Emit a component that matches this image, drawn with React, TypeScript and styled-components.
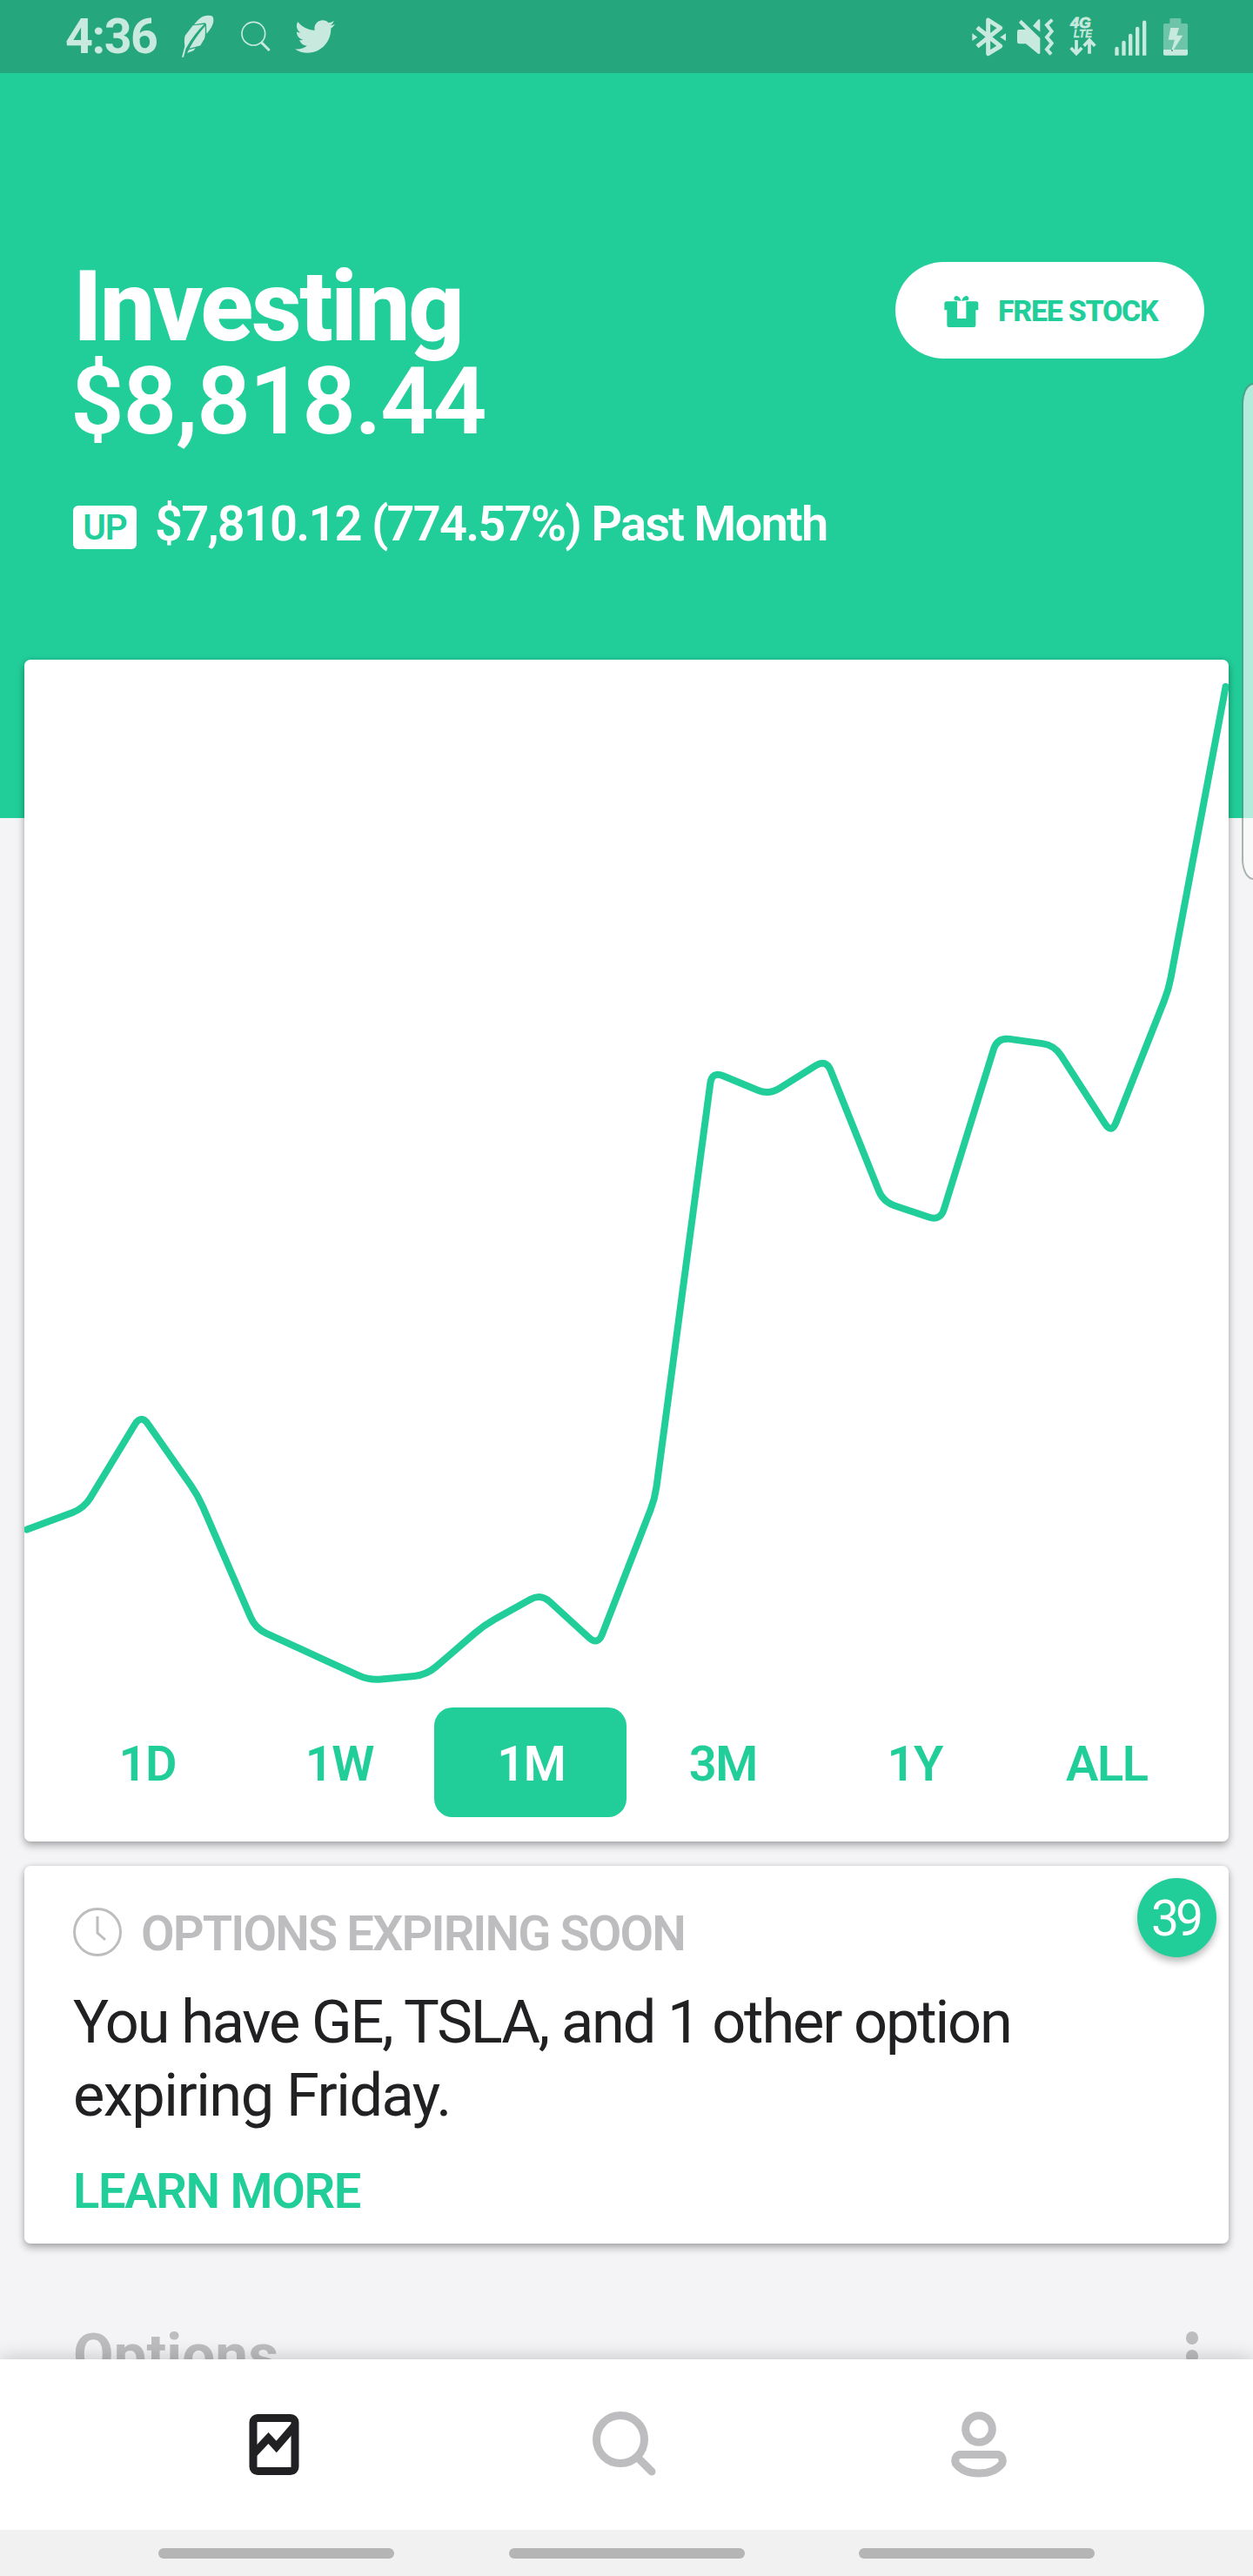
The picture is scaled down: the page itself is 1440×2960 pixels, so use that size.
import React from 'react';
import styled, { createGlobalStyle } from 'styled-components';
import { FaTwitter } from 'react-icons/fa';

const GREEN = '#21ce99';
const GREY = '#bdbdbf';
const INK = '#212123';
const STATUS_ICON = '#c8e9de';

const GlobalStyle = createGlobalStyle`
  * { box-sizing: border-box; }
  body {
    margin: 0;
    background: #f4f4f6;
    font-family: Roboto, "Liberation Sans", sans-serif;
  }
`;

const Screen = styled.div`
  position: relative;
  width: 1440px;
  height: 2960px;
  display: flex;
  flex-direction: column;
  overflow: hidden;
  background: #f4f4f6;
`;

const StatusBar = styled.header`
  flex: none;
  height: 84px;
  padding: 0 75px 0 75px;
  display: flex;
  align-items: center;
  justify-content: space-between;
  background: #26a67c;
  color: ${STATUS_ICON};
`;

const StatusGroup = styled.div`
  display: flex;
  align-items: center;
  height: 84px;
`;

const Clock = styled.span`
  width: 134px;
  padding-top: 1px;
  font-size: 55.5px;
  line-height: 84px;
  font-weight: 700;
  letter-spacing: -1.4px;
`;

const StatusIcon = styled.svg<{ $gap?: number }>`
  display: block;
  flex: none;
  margin-left: ${(p) => p.$gap ?? 0}px;
  fill: currentColor;
`;

const TwitterIcon = styled(FaTwitter)`
  width: 46px;
  height: 46px;
  margin-left: 28px;
`;

const Hero = styled.section`
  flex: none;
  height: 856px;
  padding: 214px 56px 0 84px;
  background: ${GREEN};
  color: #fff;
`;

const HeroTop = styled.div`
  display: flex;
  align-items: flex-start;
  justify-content: space-between;
`;

const Title = styled.h1`
  margin: 0;
  font-size: 112.5px;
  line-height: 109px;
  font-weight: 800;
  letter-spacing: -2.4px;
`;

const Balance = styled.div`
  margin-left: -3px;
  font-size: 108px;
  line-height: 109px;
  font-weight: 650;
  letter-spacing: -1.2px;
`;

const FreeStock = styled.button`
  width: 355px;
  height: 111px;
  margin: 3px 0 0;
  padding: 2px 0 0 56px;
  display: flex;
  align-items: center;
  gap: 22px;
  border: 0;
  border-radius: 56px;
  background: #fff;
  color: ${GREEN};
  font: 800 33.8px Roboto, "Liberation Sans", sans-serif;
  letter-spacing: -1.2px;
  white-space: nowrap;
`;

const ChangeRow = styled.div`
  display: flex;
  align-items: flex-start;
  margin-top: 59px;
`;

const UpBadge = styled.span`
  width: 73px;
  height: 50px;
  margin: 6px 21px 0 0;
  border-radius: 6px;
  background: #fff;
  color: ${GREEN};
  font-size: 40.5px;
  line-height: 51px;
  font-weight: 600;
  letter-spacing: -1px;
  text-align: center;
`;

const ChangeText = styled.span`
  font-size: 56px;
  line-height: 54px;
  font-weight: 600;
  letter-spacing: -1.8px;
  white-space: nowrap;
`;

const Feed = styled.main`
  flex: 1;
  min-height: 0;
  margin-top: -182px;
  padding: 0 28px;
`;

const Card = styled.section`
  position: relative;
  border-radius: 7px;
  background: #fff;
  box-shadow: 0 5px 10px rgba(0, 0, 0, 0.28), 0 0 6px rgba(0, 0, 0, 0.12);
`;

const ChartCard = styled(Card)`
  height: 1358px;
`;

const Chart = styled.svg`
  display: block;
  width: 1384px;
  height: 1204px;
`;

const Ranges = styled.div`
  display: grid;
  grid-template-columns: repeat(6, 1fr);
  height: 126px;
  padding: 0 31px 0 30px;
`;

const Range = styled.button<{ $active: boolean }>`
  padding: 3px 0 0 2px;
  border: 0;
  border-radius: 21px;
  background: ${(p) => (p.$active ? GREEN : 'transparent')};
  color: ${(p) => (p.$active ? '#fff' : GREEN)};
  font: 600 56px Roboto, "Liberation Sans", sans-serif;
  letter-spacing: -1.5px;
`;

const AlertCard = styled(Card)`
  height: 434px;
  margin-top: 28px;
  padding: 48px 56px 0;
`;

const AlertHeading = styled.h2`
  display: flex;
  align-items: center;
  gap: 22px;
  height: 56px;
  margin: 0;
  padding-top: 0;
  color: ${GREY};
  font-size: 56px;
  line-height: 60px;
  font-weight: 600;
  letter-spacing: -1.9px;
  white-space: nowrap;
`;

const AlertLabel = styled.span`
  padding-top: 3px;
`;

const AlertText = styled.p`
  margin: 34px 0 0;
  color: ${INK};
  font-size: 68.5px;
  line-height: 84px;
  font-weight: 450;
`;

const AlertLine = styled.span<{ $tracking: number }>`
  display: block;
  letter-spacing: ${(p) => p.$tracking}px;
  white-space: nowrap;
`;

const LearnMore = styled.a`
  display: block;
  margin-top: 38px;
  color: ${GREEN};
  font-size: 56px;
  line-height: 60px;
  font-weight: 600;
  letter-spacing: -1.3px;
`;

const CountBadge = styled.span`
  position: absolute;
  top: 14px;
  right: 14px;
  width: 91px;
  height: 91px;
  border-radius: 50%;
  background: ${GREEN};
  color: #fff;
  font-size: 57px;
  line-height: 93px;
  font-weight: 450;
  letter-spacing: -4px;
  text-indent: -3px;
  text-align: center;
  box-shadow: 0 5px 9px rgba(0, 0, 0, 0.28);
`;

const SectionHeader = styled.div`
  display: flex;
  justify-content: space-between;
  align-items: flex-start;
  margin-top: 94px;
  padding: 0 35px 0 56px;
  color: ${GREY};
`;

const SectionTitle = styled.h2`
  margin: 0;
  font-size: 67.5px;
  line-height: 68px;
  font-weight: 700;
`;

const MoreDots = styled.div`
  display: flex;
  flex-direction: column;
  gap: 6.5px;
  margin-top: 7px;
`;

const Dot = styled.i`
  width: 14.5px;
  height: 14.5px;
  border-radius: 50%;
  background: ${GREY};
`;

const BottomNav = styled.nav`
  position: relative;
  flex: none;
  display: grid;
  grid-template-columns: repeat(3, 1fr);
  height: 196px;
  padding: 0 112px;
  background: #fff;
  box-shadow: 0 0 22px rgba(0, 0, 0, 0.22);
`;

const NavItem = styled.button<{ $active?: boolean }>`
  display: flex;
  align-items: center;
  justify-content: center;
  padding: 0;
  border: 0;
  background: none;
  color: ${(p) => (p.$active ? INK : GREY)};
`;

const NavIcon = styled.svg`
  display: block;
  width: 80px;
  height: 80px;
  fill: none;
  stroke: currentColor;
  stroke-width: 9;
`;

const SystemBar = styled.footer`
  position: relative;
  flex: none;
  display: flex;
  align-items: center;
  justify-content: center;
  gap: 131.5px;
  height: 53px;
  background: #f1f1f1;
`;

const SystemKey = styled.span`
  width: 271px;
  height: 12.5px;
  margin-top: 1px;
  border-radius: 7px;
  background: #b5b5b5;
`;

const EdgeHandle = styled.div`
  position: absolute;
  top: 440px;
  right: -14px;
  width: 27px;
  height: 571px;
  border: 2px solid rgba(110, 125, 120, 0.55);
  border-radius: 15px / 26px;
  background: rgba(250, 250, 250, 0.68);
  background-clip: padding-box;
`;

const values = [
  1757.5, 1733, 1625, 1719, 1871, 1901, 1931, 1924.5, 1868, 1831, 1891, 1722,
  1231, 1258, 1217, 1381, 1403, 1192, 1201, 1303, 1137, 789,
];

const points: [number, number][] = values.map((y, i) => [3 + i * 65.6, y - 758]);

/* Polyline whose inner corners are rounded off with quadratic curves. */
function roundedPath(pts: [number, number][], radius: number): string {
  const towards = (a: [number, number], b: [number, number]) => {
    const length = Math.hypot(b[0] - a[0], b[1] - a[1]);
    const t = radius / length;
    return `${(a[0] + (b[0] - a[0]) * t).toFixed(1)} ${(a[1] + (b[1] - a[1]) * t).toFixed(1)}`;
  };
  return pts
    .map((p, i) => {
      if (i === 0) return `M${p[0]} ${p[1]}`;
      if (i === pts.length - 1) return `L${p[0]} ${p[1]}`;
      return `L${towards(p, pts[i - 1])} Q${p[0]} ${p[1]} ${towards(p, pts[i + 1])}`;
    })
    .join(' ');
}

const ranges = ['1D', '1W', '1M', '3M', '1Y', 'ALL'];

function Feather() {
  return (
    <StatusIcon width={37} height={50} viewBox="626 52 111 150">
      <path d="M668 86Q686 62 700 57Q718 52 729 56Q736 60 735 74Q734 92 711 118L710 85Q709 80 704 80Z" />
      <path d="M664 89L703 85Q668 118 640 168L632 198H626L636 160Q633 138 637 124Z" />
      <path d="M706 91Q708 122 704 134L690 158L652 168Q672 130 706 91Z" />
      <path d="M650 173L673 167L666 176L644 184Z" />
    </StatusIcon>
  );
}

function StatusSearch() {
  return (
    <StatusIcon $gap={31} width={34} height={36} viewBox="830 72 102 108">
      <circle cx="873" cy="116" r="40" fill="none" stroke="currentColor" strokeWidth="5" />
      <path d="M900 146L928 174" stroke="currentColor" strokeWidth="9" />
    </StatusIcon>
  );
}

function BluetoothIcon() {
  return (
    <StatusIcon width={39} height={45} viewBox="114 57 117 135">
      <path
        d="M132 92L212 156L170 182V66L212 93L132 157"
        fill="none"
        stroke="currentColor"
        strokeWidth="15"
        strokeLinejoin="round"
      />
      <path d="M115 112L133 125L115 138ZM231 112L211 125L231 138Z" />
    </StatusIcon>
  );
}

function MuteIcon() {
  return (
    <StatusIcon $gap={13} width={42} height={45} viewBox="269 57 126 135">
      <path d="M283 65L348 128V180Q346 185 341 182L299 148H276Q269 148 269 141V106Q269 99 276 99H298L275 75Z" />
      <path d="M323 86L341 65Q348 60 348 68V107Z" />
      <path d="M390 65L371 83L388 105L371 125L388 146L371 167L386 184" fill="none" stroke="currentColor" strokeWidth="12" />
    </StatusIcon>
  );
}

function LteIcon() {
  return (
    <StatusIcon $gap={18} width={32} height={48} viewBox="448 57 96 144">
      <g fontFamily="Liberation Sans, sans-serif" fontWeight="700" fontStyle="italic">
        <text x="452" y="98" fontSize="51" textLength="70" lengthAdjust="spacingAndGlyphs" stroke="currentColor" strokeWidth="2.5">4G</text>
        <text x="462" y="133" fontSize="39" textLength="64" lengthAdjust="spacingAndGlyphs" stroke="currentColor" strokeWidth="1">LTE</text>
      </g>
      <path
        d="M472 141V187M453 168L472 188L491 168M517 188V142M498 161L517 141L536 161"
        fill="none"
        stroke="currentColor"
        strokeWidth="11"
      />
    </StatusIcon>
  );
}

function SignalIcon() {
  return (
    <StatusIcon $gap={20} width={37} height={45} viewBox="605 57 111 135">
      <path d="M606 188V165a6 6 0 0 1 13 0V188ZM630 188V144a6 6 0 0 1 13 0V188ZM653 188V120a6 6 0 0 1 13 0V188ZM677 188V96a6 6 0 0 1 13 0V188ZM701 188V74a6 6 0 0 1 13 0V188Z" />
    </StatusIcon>
  );
}

function BatteryIcon() {
  return (
    <StatusIcon $gap={19} width={28} height={45} viewBox="771 57 84 135">
      <path
        opacity="0.45"
        d="M793 64Q793 60 797 60H828Q832 60 832 64V78H850Q855 78 855 83V168H771V83Q771 78 776 78H793Z"
      />
      <path d="M771 168H855V183Q855 188 850 188H776Q771 188 771 183Z" />
      <path d="M796 93H825L817 119H838L805 170H799L810 134H788Z" />
      <circle cx="801" cy="171" r="2.5" fill="#16513d" />
    </StatusIcon>
  );
}

function GiftIcon() {
  return (
    <svg width={40} height={40} viewBox="434 167 120 120" fill="currentColor">
      <path d="M443 192H479V251H510V192H544Q552 192 552 200V222H543V274Q543 281 536 281H451Q444 281 444 274V222H435V200Q435 192 443 192Z" />
      <path d="M493 190Q487 174 477 173Q468 174 468 182Q468 189 476 189ZM494 190Q500 174 510 173Q519 174 519 182Q519 189 511 189Z" />
    </svg>
  );
}

function AlarmIcon() {
  return (
    <svg width={56} height={56} viewBox="0 0 56 56" fill="none" stroke="currentColor" strokeWidth="3">
      <circle cx="28" cy="28" r="26.5" />
      <path d="M28 10V29L37 37" />
    </svg>
  );
}

export default function App() {
  return (
    <>
      <GlobalStyle />
      <Screen>
        <StatusBar>
          <StatusGroup>
            <Clock>4:36</Clock>
            <Feather />
            <StatusSearch />
            <TwitterIcon />
          </StatusGroup>
          <StatusGroup>
            <BluetoothIcon />
            <MuteIcon />
            <LteIcon />
            <SignalIcon />
            <BatteryIcon />
          </StatusGroup>
        </StatusBar>

        <Hero>
          <HeroTop>
            <div>
              <Title>Investing</Title>
              <Balance>$8,818.44</Balance>
            </div>
            <FreeStock>
              <GiftIcon />
              FREE STOCK
            </FreeStock>
          </HeroTop>
          <ChangeRow>
            <UpBadge>UP</UpBadge>
            <ChangeText>$7,810.12 (774.57%) Past Month</ChangeText>
          </ChangeRow>
        </Hero>

        <Feed>
          <ChartCard>
            <Chart viewBox="0 0 1384 1204">
              <path
                d={roundedPath(points, 14)}
                fill="none"
                stroke={GREEN}
                strokeWidth="8"
                strokeLinecap="round"
              />
            </Chart>
            <Ranges>
              {ranges.map((r) => (
                <Range key={r} $active={r === '1M'}>
                  {r}
                </Range>
              ))}
            </Ranges>
          </ChartCard>

          <AlertCard>
            <AlertHeading>
              <AlarmIcon />
              <AlertLabel>OPTIONS EXPIRING SOON</AlertLabel>
            </AlertHeading>
            <AlertText>
              <AlertLine $tracking={-2.15}>You have GE, TSLA, and 1 other option</AlertLine>
              <AlertLine $tracking={-1.5}>expiring Friday.</AlertLine>
            </AlertText>
            <LearnMore>LEARN MORE</LearnMore>
            <CountBadge>39</CountBadge>
          </AlertCard>

          <SectionHeader>
            <SectionTitle>Options</SectionTitle>
            <MoreDots>
              <Dot />
              <Dot />
              <Dot />
            </MoreDots>
          </SectionHeader>
        </Feed>

        <BottomNav>
          <NavItem $active>
            <NavIcon viewBox="275 2769 80 80">
              <rect x="291" y="2778.5" width="48" height="61" rx="5" />
              <path d="M292 2819L308.5 2801.5L317.7 2811.5L338 2788" />
            </NavIcon>
          </NavItem>
          <NavItem>
            <NavIcon viewBox="681 2769 80 80">
              <circle cx="714" cy="2803" r="27.5" />
              <path d="M734 2824L750 2840" strokeLinecap="round" />
            </NavIcon>
          </NavItem>
          <NavItem>
            <NavIcon viewBox="1085 2769 80 80">
              <circle cx="1125" cy="2791" r="15.3" />
              <path d="M1104 2820.5H1146C1151 2820.5 1153.500 2826 1151.500 2831C1146 2838 1137 2842 1125 2842C1113 2842 1104 2838 1098.500 2831C1096.500 2826 1099 2820.5 1104 2820.5Z" />
            </NavIcon>
          </NavItem>
        </BottomNav>

        <SystemBar>
          <SystemKey />
          <SystemKey />
          <SystemKey />
        </SystemBar>

        <EdgeHandle />
      </Screen>
    </>
  );
}
